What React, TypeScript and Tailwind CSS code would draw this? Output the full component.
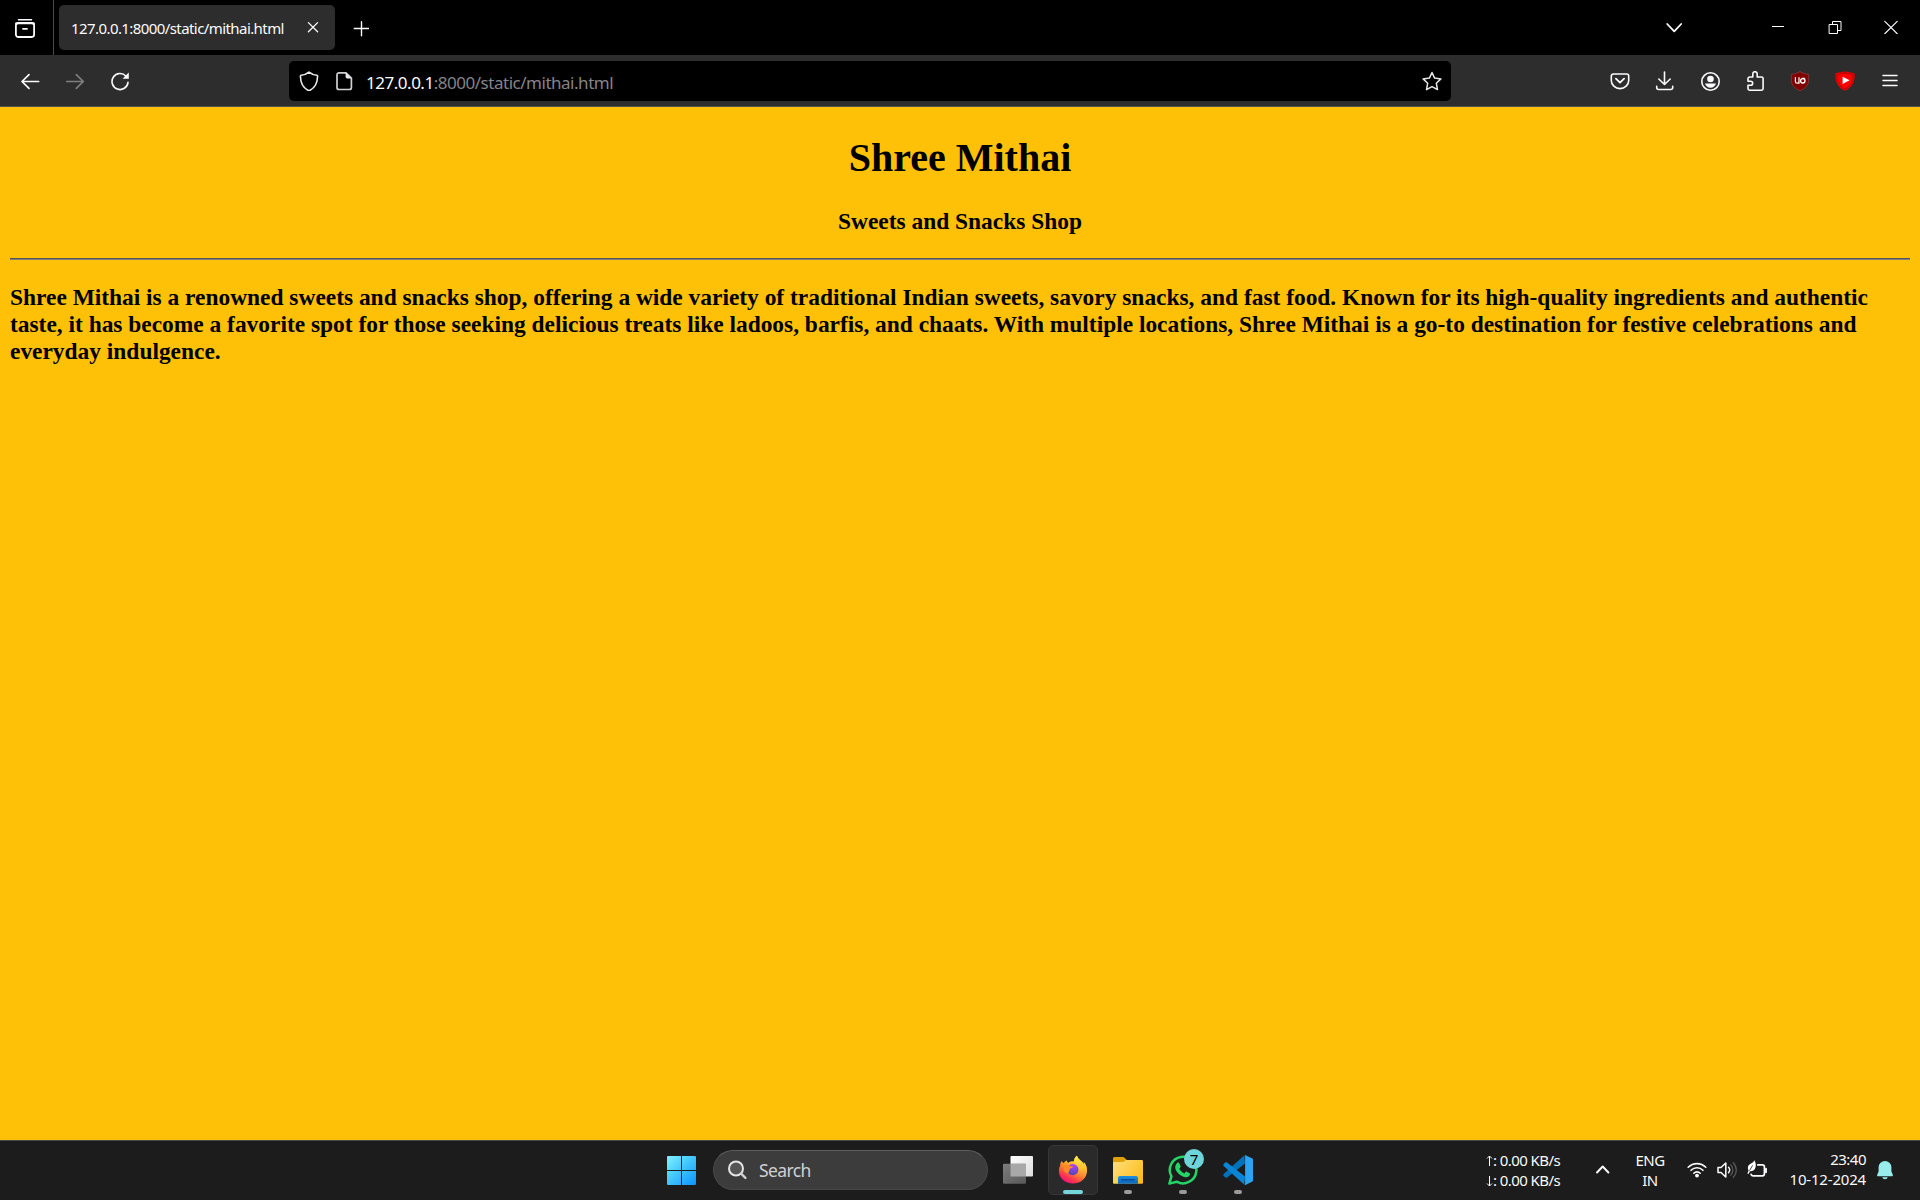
import type { ReactNode } from "react";

type IconProps = { size?: number; className?: string; children: ReactNode };

function Icon({ size = 20, className = "", children }: IconProps) {
  return (
    <svg
      width={size}
      height={size}
      viewBox={`0 0 ${size} ${size}`}
      fill="none"
      stroke="#fbfbfe"
      strokeWidth="1.5"
      strokeLinecap="round"
      strokeLinejoin="round"
      className={`block shrink-0 ${className}`}
    >
      {children}
    </svg>
  );
}

function TabBar() {
  return (
    <div className="flex h-[55px] bg-black">
      <div className="flex h-full w-[54px] border-r border-[#4a4a4a] pt-[18px] pl-[15px]">
        <Icon>
          <path d="M3.5 1.7h13" strokeWidth="1.5" />
          <rect x="0.9" y="5" width="18.2" height="14" rx="2.4" strokeWidth="1.8" />
          <path d="M1 5.3h18M8 10.8h4" strokeWidth="1.8" />
        </Icon>
      </div>
      <div className="mt-[5px] ml-[5px] flex h-[45px] w-[276px] rounded-[5px] bg-[#2d2d2d] pl-[12px]">
        <span className="w-[231px] pt-[12px] text-[15px] leading-[22px] tracking-[-0.58px] whitespace-nowrap text-[#fbfbfe]">
          127.0.0.1:8000/static/mithai.html
        </span>
        <Icon size={12} className="mt-[16px] ml-[5px]">
          <path d="M1.4 1.6l9.2 9.2M10.6 1.6l-9.2 9.2" strokeWidth="1.3" />
        </Icon>
      </div>
      <Icon size={16} className="mt-[21px] ml-[18px]">
        <path d="M8.5 .8v14M1.300 7.500h14.400" strokeWidth="1.400" />
      </Icon>
      <div className="ml-auto flex pr-[22px]">
        <Icon size={18} className="mt-[18px] mr-[88px]">
          <path d="M2.2 6l7 7.3 7-7.3" strokeWidth="1.8" />
        </Icon>
        <Icon size={14} className="mt-[20px] mr-[43px]">
          <path d="M1 6.5h12" strokeWidth="1" strokeLinecap="butt" />
        </Icon>
        <Icon size={14} className="mt-[20px] mr-[42px]">
          <path d="M1.5 4.5h8v9h-8zM4.500 4.500v-3h8.500v9h-3.500" strokeWidth="1" strokeLinejoin="miter" />
        </Icon>
        <Icon size={14} className="mt-[20px]">
          <path d="M.8 1.300l12.400 12.400M13.200 1.300L.8 13.700" strokeWidth="1.200" />
        </Icon>
      </div>
    </div>
  );
}

function Toolbar() {
  return (
    <div className="flex h-[52px] border-b border-[#525252] bg-[#2d2d2d] pr-[20px] pl-[20px]">
      <div className="flex gap-[25px] pt-4">
        <Icon>
          <path d="M2.200 10.500h16.400M9 3.600l-7 6.900 7 6.900" strokeWidth="1.700" />
        </Icon>
        <Icon>
          <path d="M1.800 10.500h16.400M11.300 3.600l7 6.900-7 6.900" strokeWidth="1.700" stroke="#7f7f80" />
        </Icon>
        <Icon>
          <path d="M18 11.300a8 8 0 1 1-2-6.100" strokeWidth="1.600" />
          <path d="M18.800 1.600v6.200h-6.200z" fill="#fbfbfe" stroke="none" />
        </Icon>
      </div>
      <div className="mt-[6px] ml-[159px] flex h-[40px] w-[1162px] rounded-[5px] bg-black pr-[9px] pl-[10px] pt-[10px]">
        <Icon>
          <path
            d="M10 1.200C7.800 3 5 4.100 2.100 4.300c-.5 0-.7.3-.7.8.1 5.900 2 11.700 8.100 14.500.3.2.7.2 1 0 6.100-2.800 8-8.600 8.100-14.500 0-.5-.2-.8-.7-.8C15 4.100 12.200 3 10 1.200z"
            strokeWidth="1.6"
            stroke="#e8e8ea"
          />
        </Icon>
        <Icon className="ml-[15px]">
          <path d="M12 1.800H5a2 2 0 0 0-2 2v12.700a2 2 0 0 0 2 2h10.400a2 2 0 0 0 2-2V7.200z" strokeWidth="1.700" stroke="#d0d0d2" />
          <path d="M11.600 1.500v4.300a1.600 1.600 0 0 0 1.600 1.600h4.400z" fill="#e8e8ea" stroke="none" />
        </Icon>
        <span className="ml-[12px] text-[17px] leading-[24px] tracking-[-0.48px] whitespace-nowrap text-[#848487]">
          <span className="text-[#fbfbfe]">127.0.0.1</span>:8000/static/mithai.html
        </span>
        <Icon className="ml-auto">
          <path
            d="M10 1.500l2.600 5.600 6.300.8-4.600 4.300 1.200 6.400L10 15.600l-5.500 3 1.200-6.400L1.100 7.900l6.300-.8z"
            strokeWidth="1.500"
            stroke="#e8e8ea"
          />
        </Icon>
      </div>
      <div className="ml-auto flex gap-[25px] pt-4">
        <Icon>
          <path d="M3.300 3h13.400a2 2 0 0 1 2 2v4.400a8.700 8.200 0 0 1-17.400 0V5a2 2 0 0 1 2-2z" strokeWidth="1.600" />
          <path d="M5.900 7.700l4.100 3.900 4.100-3.900" strokeWidth="1.800" />
        </Icon>
        <Icon>
          <path d="M9.500 1v12.200M3.800 8l5.700 5.500L15.200 8" strokeWidth="1.600" />
          <path d="M1.700 15.200v1.300a2 2 0 0 0 2 2h12a2 2 0 0 0 2-2v-1.300" strokeWidth="1.600" />
        </Icon>
        <Icon>
          <circle cx="10.500" cy="10.500" r="8.700" strokeWidth="1.600" />
          <circle cx="10.500" cy="8" r="3.300" fill="#fbfbfe" stroke="none" />
          <path d="M5 12.600h11c-.8 2.600-2.800 4.200-5.500 4.200S5.800 15.200 5 12.600z" fill="#fbfbfe" stroke="none" />
        </Icon>
        <Icon>
          <path
            d="M7.800 6V2.900a2.200 2.200 0 0 1 4.400 0V6h4.300a1.600 1.600 0 0 1 1.600 1.600v10a1.600 1.600 0 0 1-1.600 1.600H4.600A1.600 1.600 0 0 1 3 17.600v-3.300h2.600a2 2 0 0 0 0-4.100H3V7.600A1.600 1.600 0 0 1 4.600 6z"
            strokeWidth="1.600"
          />
        </Icon>
        <Icon>
          <path d="M10 .6c2.800 1.800 5.600 2.500 8.600 2.700v5.900c0 5-3.600 8.200-8.600 10.600C5 17.400 1.400 14.200 1.400 9.200V3.300C4.400 3.100 7.200 2.400 10 .6z" fill="#800000" stroke="#8c3a3a" strokeWidth=".8" />
          <path d="M5.400 6.700v3.700a1.800 1.800 0 0 0 3.600 0V6.700M9 10.300v2" stroke="#fff" strokeWidth="1.200" />
          <circle cx="12.800" cy="9.800" r="2.200" stroke="#fff" strokeWidth="1.300" />
          <path d="M12.500 7.300h2.300" stroke="#fff" strokeWidth="1.100" />
        </Icon>
        <Icon>
          <path d="M10 .4c3 .5 6.300.9 9.600 2.100.5 6.400-1.300 13.400-9.600 17.300C1.700 15.900-.1 8.900.4 2.500 3.700 1.300 7 .9 10 .4z" fill="#e60000" stroke="none" />
          <path d="M10 2c2.700.4 5.400.8 8 1.600.2 5.700-1.500 11-8 14.500C3.500 14.600 1.800 9.300 2 3.600 4.600 2.800 7.300 2.400 10 2z" fill="#ff0000" stroke="#960000" strokeWidth=".6" />
          <path d="M7.600 5.700v7.200l7-3.600z" fill="#fff" stroke="none" />
        </Icon>
        <Icon>
          <path d="M3 4.500h14M3 9.500h14M3 14.500h14" strokeWidth="1.500" />
        </Icon>
      </div>
    </div>
  );
}

function ShopPage() {
  return (
    <main className="h-[1033px] bg-[#ffc107] px-[10px] font-['Liberation_Serif',serif] font-bold text-black">
      <h1 className="pt-[28px] text-center text-[40px] leading-[46px]">Shree Mithai</h1>
      <h3 className="pt-[27px] text-center text-[23.42px] leading-[27px]">Sweets and Snacks Shop</h3>
      <hr className="mt-[23px] h-[2px] border-t border-b border-t-[#54545c] border-b-[#80807a]" />
      <p className="pt-[24px] text-[23.42px] leading-[27px]">
        Shree Mithai is a renowned sweets and snacks shop, offering a wide variety of traditional Indian sweets, savory
        snacks, and fast food. Known for its high-quality ingredients and authentic taste, it has become a favorite spot
        for those seeking delicious treats like ladoos, barfis, and chaats. With multiple locations, Shree Mithai is a
        go-to destination for festive celebrations and everyday indulgence.
      </p>
    </main>
  );
}

function AppSlot({ active = false, children }: { active?: boolean; children: ReactNode }) {
  return (
    <div
      className={
        active
          ? "flex h-[50px] w-[50px] flex-col items-center justify-between rounded-[5px] border border-[#363636] bg-[#2a2a2a] pt-[9px]"
          : "flex h-[50px] w-[50px] flex-col items-center justify-between border border-transparent pt-[9px]"
      }
    >
      {children}
      <div className={active ? "h-[4px] w-[20px] rounded-full bg-[#76d4dc]" : "h-[4px] w-[8px] rounded-full bg-[#9a9a9a]"} />
    </div>
  );
}

function StartIcon() {
  return (
    <svg width="30" height="30" viewBox="0 0 30 30" className="block">
      <defs>
        <linearGradient id="start" x1="0" y1="0" x2="29" y2="29" gradientUnits="userSpaceOnUse">
          <stop offset="0" stopColor="#7ff3ff" />
          <stop offset=".5" stopColor="#3fc3fb" />
          <stop offset="1" stopColor="#0a93ff" />
        </linearGradient>
      </defs>
      <path d="M1 0h13v14H0V1a1 1 0 0 1 1-1zM15 0h13a1 1 0 0 1 1 1v13H15zM0 15h14v14H1a1 1 0 0 1-1-1zM15 15h14v13a1 1 0 0 1-1 1H15z" fill="url(#start)" />
    </svg>
  );
}

function TaskViewIcon() {
  return (
    <svg width="30" height="28" viewBox="0 0 30 28" className="block">
      <defs>
        <linearGradient id="tvA" x1="0" y1="0" x2="1" y2="1">
          <stop offset="0" stopColor="#ffffff" />
          <stop offset="1" stopColor="#dcdcdc" />
        </linearGradient>
        <linearGradient id="tvB" x1="0" y1="0" x2="1" y2="1">
          <stop offset="0" stopColor="#7d7d7d" />
          <stop offset="1" stopColor="#585858" />
        </linearGradient>
      </defs>
      <rect x="7.500" y="0" width="22.500" height="20.500" rx="1" fill="url(#tvA)" />
      <rect x="0" y="7.800" width="23" height="20" rx="1" fill="url(#tvB)" />
      <rect x="7.500" y="7.800" width="15.500" height="12.700" fill="#a8a8a8" />
    </svg>
  );
}

function FirefoxIcon() {
  return (
    <svg width="30" height="30" viewBox="0 0 30 30" className="block">
      <defs>
        <linearGradient id="ffBody" x1="23" y1="3" x2="9" y2="28" gradientUnits="userSpaceOnUse">
          <stop offset="0" stopColor="#fff44f" />
          <stop offset=".3" stopColor="#ffc02c" />
          <stop offset=".58" stopColor="#ff7a30" />
          <stop offset=".82" stopColor="#ff3550" />
          <stop offset="1" stopColor="#f0127e" />
        </linearGradient>
        <linearGradient id="ffFlame" x1="20" y1="0" x2="21" y2="24" gradientUnits="userSpaceOnUse">
          <stop offset="0" stopColor="#fff24c" />
          <stop offset=".55" stopColor="#ffc22e" />
          <stop offset="1" stopColor="#ff6a3a" stopOpacity="0" />
        </linearGradient>
        <radialGradient id="ffGlobe" cx="16" cy="10" r="10" gradientUnits="userSpaceOnUse">
          <stop offset="0" stopColor="#b63cf5" />
          <stop offset=".5" stopColor="#8044e6" />
          <stop offset="1" stopColor="#5a45b4" />
        </radialGradient>
      </defs>
      <path
        d="M19 .7c-2.300 1.700-3 4-3 5.600-2-.2-4 .2-5.500 1.500-1-.5-1.500-.8-1.800-2.300-1.400.6-2.200 1.500-2.800 2.600-1.200-.2-1.700-.9-2.100-2-1.200 1.200-1.700 3-1.600 4.700C1.300 12.200.9 14 .9 16 .9 23 7 28.600 15 28.600S29 23 29 15.800c0-3.600-1.300-6.700-3.300-8.800.3 1.200.4 2 .4 2.800C25 6.300 20 5 19 .7z"
        fill="url(#ffBody)"
      />
      <path d="M19 .7c-2.300 1.700-3 4-3 5.600 3 .6 4.800 4 4.800 8.300 0 4.600-2.300 7-5.500 7.600 7.700 1.300 12.700-1.500 13.700-6.400 0-3.600-1.300-6.700-3.300-8.800.3 1.200.4 2 .4 2.800C25 6.300 20 5 19 .7z" fill="url(#ffFlame)" />
      <ellipse cx="14.700" cy="14.600" rx="5.700" ry="5.600" fill="url(#ffGlobe)" />
      <path d="M5.300 12.600c1-2 3.400-3 6.200-2.400.9 1.100 2 1.100 3.800 1.200-.6 1.400-2.100 1.500-3.200 2.400-.9.800-.4 2-2.100 4.600-2.600.2-4.600-2.800-4.700-5.800z" fill="#ff8a24" />
    </svg>
  );
}

function ExplorerIcon() {
  return (
    <svg width="30" height="30" viewBox="0 0 30 30" className="block">
      <defs>
        <linearGradient id="fold" x1="0" y1="6" x2="30" y2="29" gradientUnits="userSpaceOnUse">
          <stop offset="0" stopColor="#ffe07a" />
          <stop offset="1" stopColor="#fdb813" />
        </linearGradient>
        <linearGradient id="foldBlue" x1="0" y1="21" x2="0" y2="29" gradientUnits="userSpaceOnUse">
          <stop offset="0" stopColor="#1c90e0" />
          <stop offset="1" stopColor="#0b66bd" />
        </linearGradient>
      </defs>
      <path d="M0 3.500A1.500 1.500 0 0 1 1.500 2h8.300c.7 0 1.200.2 1.700.7L13.800 5H29v5H0z" fill="#e0a106" />
      <path d="M0 8.200A1.200 1.200 0 0 1 1.200 7h8.600c.8 0 1.300-.3 1.800-.8L12.800 5H28.800A1.200 1.200 0 0 1 30 6.200v21.600a1 1 0 0 1-1 1H1a1 1 0 0 1-1-1z" fill="url(#fold)" />
      <path d="M5 28.800V23a2 2 0 0 1 2-2h16a2 2 0 0 1 2 2v5.800z" fill="url(#foldBlue)" />
      <path d="M8.500 24.800h13" stroke="#07438c" strokeWidth="1.200" strokeLinecap="round" />
    </svg>
  );
}

function WhatsAppIcon() {
  return (
    <div className="relative">
      <svg width="30" height="30" viewBox="0 0 30 30" className="block">
        <path d="M1.400 28.600l2-7.200A13.300 13.300 0 1 1 8.700 26.700z" fill="none" stroke="#25d366" strokeWidth="2.500" strokeLinejoin="round" />
        <path
          d="M9.200 8c.5-.5 1.500-.6 1.900 0l1.500 3.300c.2.500 0 .9-1.300 2.400 1.200 2.200 2.700 3.600 5.100 4.700 1-1 1.300-1.900 1.900-1.800l3.300 1.600c.6.3.5 1.100.1 2.100-.7 1.500-2.700 2.200-4.200 1.900-5.200-1.100-9-4.800-10.200-8.800-.4-2 .5-4.200 1.900-5.400z"
          fill="#25d366"
        />
      </svg>
      <div className="absolute top-[-6px] left-[16px] h-[20px] w-[20px] rounded-full bg-[#6fd3da] text-center text-[15px] leading-[20px] text-black">7</div>
    </div>
  );
}

function CodeIcon() {
  return (
    <svg width="30" height="30" viewBox="0 0 30 30" className="block">
      <path d="M21.300.3L.7 19.100c-.5.5-.5 1.300 0 1.800l1.700 1.500c.5.400 1.100.4 1.600.1L22 8.600z" fill="#0072bb" />
      <path d="M21.300 29.700L.7 10.900c-.5-.5-.5-1.300 0-1.800l1.700-1.500c.5-.4 1.100-.4 1.600-.1L22 21.400z" fill="#0a84d4" />
      <path d="M21.300.3c.4-.2.8-.2 1.200 0L29 3.300c.6.3 1 .8 1 1.500v20.400c0 .7-.4 1.200-1 1.500l-6.500 3.200c-.4.200-.9.100-1.200-.2.500.2.800-.2.800-.8V1.100c0-.6-.3-1-.8-.8z" fill="#2aa4f2" />
    </svg>
  );
}

function Taskbar() {
  return (
    <footer className="flex h-[60px] border-t border-[#474747] bg-[#1c1c1c] text-[#fafafa]">
      <div className="mt-[15px] ml-[667px] w-[46px]">
        <StartIcon />
      </div>
      <div className="mt-[9px] flex h-[40px] w-[275px] rounded-full border border-[#484848] border-t-[#5e5e5e] bg-[#3c3c3c] pl-[14px]">
        <Icon className="mt-[9px]">
          <circle cx="8" cy="8.500" r="7" stroke="#e4e4e4" strokeWidth="2" fill="#555" />
          <path d="M13.200 13.700l4.200 4.200" stroke="#cfcfd4" strokeWidth="2.400" />
        </Icon>
        <span className="mt-[6px] ml-[11px] text-[17.500px] leading-[26px] tracking-[-0.600px] text-[#d0d0d0]">Search</span>
      </div>
      <div className="mt-[15px] ml-[15px] w-[45px]">
        <TaskViewIcon />
      </div>
      <div className="mt-[4px] flex gap-[5px]">
        <AppSlot active>
          <FirefoxIcon />
        </AppSlot>
        <AppSlot>
          <ExplorerIcon />
        </AppSlot>
        <AppSlot>
          <WhatsAppIcon />
        </AppSlot>
        <AppSlot>
          <CodeIcon />
        </AppSlot>
      </div>
      <div className="ml-auto flex pr-[26px] text-[15px] leading-[20px] whitespace-nowrap">
        <div className="mt-[9px] w-[109px] tracking-[-0.580px]">
          <div className="flex items-center">
            <svg width="7" height="12" viewBox="0 0 7 12" fill="none" stroke="#fafafa" className="mt-[1px]">
              <path d="M3.500 1v10M1 3.500L3.500 1 6 3.500" />
            </svg>
            <span>: 0.00 KB/s</span>
          </div>
          <div className="flex items-center">
            <svg width="7" height="12" viewBox="0 0 7 12" fill="none" stroke="#fafafa" className="mt-[1px]">
              <path d="M3.500 1v10M1 8.500L3.500 11 6 8.500" />
            </svg>
            <span>: 0.00 KB/s</span>
          </div>
        </div>
        <Icon size={16} className="mt-[20px] mr-[24px]">
          <path d="M2 11.500l5.700-6 5.700 6" strokeWidth="1.900" />
        </Icon>
        <div className="mt-[9px] w-[30px] text-center tracking-[-0.500px]">
          <div>ENG</div>
          <div>IN</div>
        </div>
        <Icon className="mt-[19px] ml-[22px]">
          <path d="M1.200 7.200a12.500 12.500 0 0 1 17.600 0M4 10.300a8.500 8.500 0 0 1 12 0M6.800 13.200a4.500 4.500 0 0 1 6.400 0" strokeWidth="1.600" />
          <circle cx="10" cy="15.600" r="1.900" fill="#fff" stroke="none" />
        </Icon>
        <Icon className="mt-[19px] ml-[10px]">
          <path d="M1 7.500h3L8.800 3v14L4 12.500H1z" strokeWidth="1.500" />
          <path d="M11.500 7.300a4 4 0 0 1 0 5.400" strokeWidth="1.400" />
          <path d="M13.800 5a7 7 0 0 1 0 10M16.200 2.700a10.200 10.200 0 0 1 0 14.600" strokeWidth="1.200" stroke="#5a5a5a" />
        </Icon>
        <Icon className="mt-[19px] ml-[10px]">
          <path d="M10.800 4.900h4.600a2 2 0 0 1 2 2v6.900a2 2 0 0 1-2 2H6.200a2.200 2.200 0 0 1-2.100-1.400" strokeWidth="1.700" />
          <path d="M19 8.600v3.600" strokeWidth="1.900" />
          <path d="M7.400.2c1.900 3.200 1.900 6.700.3 9.100-1.100 1.600-3 2.200-4.800 1.900l-1.300 2.900-1.200-.6 1.200-2.900C.2 8 .8 5.200 3.100 4 5.100 3 6.600 2 7.400.2z" fill="#fff" stroke="none" />
          <path d="M2.700 10.300l2.700-4.600" stroke="#1c1c1c" strokeWidth=".8" />
        </Icon>
        <div className="mt-[8px] w-[99px] text-right tracking-[-0.180px]">
          <div className="tracking-[-0.500px]">23:40</div>
          <div>10-12-2024</div>
        </div>
        <svg width="18" height="20" viewBox="0 0 18 20" className="mt-[20px] ml-[10px] block">
          <path d="M9 0a6.400 6.400 0 0 1 6.400 6.200v4.300l1.400 3.300c.3.800-.2 1.500-1 1.500H2.200c-.8 0-1.300-.7-1-1.500l1.400-3.300V6.200A6.400 6.400 0 0 1 9 0zM6.200 16.200h5.600a2.900 2.900 0 0 1-5.600 0z" fill="#98ecec" />
        </svg>
      </div>
    </footer>
  );
}

export default function App() {
  return (
    <div className="flex h-[1200px] w-[1920px] flex-col overflow-hidden font-['Noto_Sans','Open_Sans',sans-serif]">
      <TabBar />
      <Toolbar />
      <ShopPage />
      <Taskbar />
    </div>
  );
}
